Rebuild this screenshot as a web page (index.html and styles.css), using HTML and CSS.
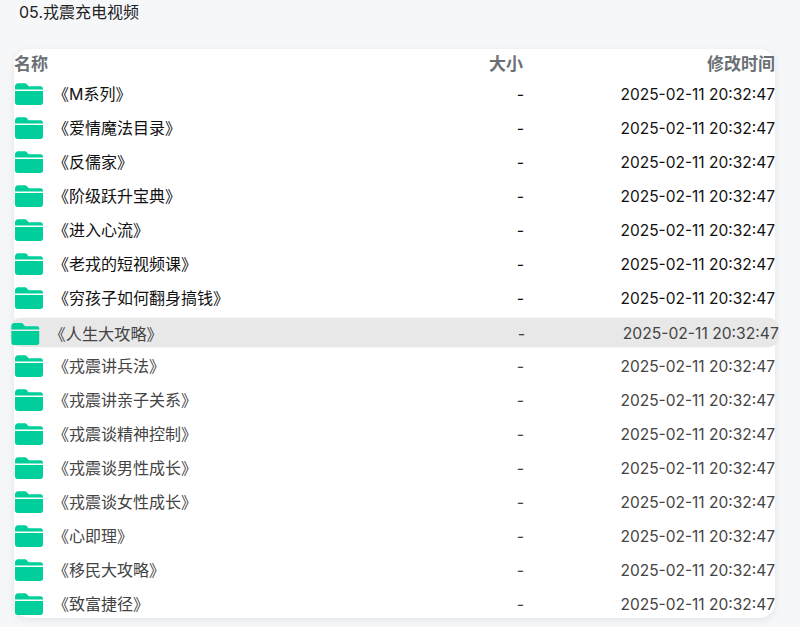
FILE: index.html
```html
<!DOCTYPE html>
<html lang="zh-CN">
<head>
<meta charset="utf-8">
<title>05.戎震充电视频</title>
<link rel="stylesheet" href="styles.css">
</head>
<body>
<svg class="defs" width="0" height="0" aria-hidden="true"><symbol id="folder" viewBox="0 0 28 22"><path d="M0 3.5C0 1.6 1.4 0.2 3 0.2h6.2c1.3 0 2.2.5 3 1.4l1 1.2c.3.4.7.5 1.2.5H25.500c1.400 0 2.500 1 2.500 2.400V6.500H0z"/><path d="M0 8h28v11.500c0 1.400-1.100 2.500-2.500 2.500h-23C1.100 22 0 20.900 0 19.500z"/></symbol></svg>
<div class="crumb">05.戎震充电视频</div>
<main class="card">
<div class="row head"><span class="name">名称</span><span class="size">大小</span><span class="time">修改时间</span></div>
<div class="row"><span class="name"><svg class="icon"><use href="#folder"/></svg><span>《M系列》</span></span><span class="size">-</span><span class="time">2025-02-11 20:32:47</span></div>
<div class="row"><span class="name"><svg class="icon"><use href="#folder"/></svg><span>《爱情魔法目录》</span></span><span class="size">-</span><span class="time">2025-02-11 20:32:47</span></div>
<div class="row"><span class="name"><svg class="icon"><use href="#folder"/></svg><span>《反儒家》</span></span><span class="size">-</span><span class="time">2025-02-11 20:32:47</span></div>
<div class="row"><span class="name"><svg class="icon"><use href="#folder"/></svg><span>《阶级跃升宝典》</span></span><span class="size">-</span><span class="time">2025-02-11 20:32:47</span></div>
<div class="row"><span class="name"><svg class="icon"><use href="#folder"/></svg><span>《进入心流》</span></span><span class="size">-</span><span class="time">2025-02-11 20:32:47</span></div>
<div class="row"><span class="name"><svg class="icon"><use href="#folder"/></svg><span>《老戎的短视频课》</span></span><span class="size">-</span><span class="time">2025-02-11 20:32:47</span></div>
<div class="row"><span class="name"><svg class="icon"><use href="#folder"/></svg><span>《穷孩子如何翻身搞钱》</span></span><span class="size">-</span><span class="time">2025-02-11 20:32:47</span></div>
<div class="row active muted"><span class="name"><svg class="icon"><use href="#folder"/></svg><span>《人生大攻略》</span></span><span class="size">-</span><span class="time">2025-02-11 20:32:47</span></div>
<div class="row muted"><span class="name"><svg class="icon"><use href="#folder"/></svg><span>《戎震讲兵法》</span></span><span class="size">-</span><span class="time">2025-02-11 20:32:47</span></div>
<div class="row muted"><span class="name"><svg class="icon"><use href="#folder"/></svg><span>《戎震讲亲子关系》</span></span><span class="size">-</span><span class="time">2025-02-11 20:32:47</span></div>
<div class="row muted"><span class="name"><svg class="icon"><use href="#folder"/></svg><span>《戎震谈精神控制》</span></span><span class="size">-</span><span class="time">2025-02-11 20:32:47</span></div>
<div class="row muted"><span class="name"><svg class="icon"><use href="#folder"/></svg><span>《戎震谈男性成长》</span></span><span class="size">-</span><span class="time">2025-02-11 20:32:47</span></div>
<div class="row muted"><span class="name"><svg class="icon"><use href="#folder"/></svg><span>《戎震谈女性成长》</span></span><span class="size">-</span><span class="time">2025-02-11 20:32:47</span></div>
<div class="row muted"><span class="name"><svg class="icon"><use href="#folder"/></svg><span>《心即理》</span></span><span class="size">-</span><span class="time">2025-02-11 20:32:47</span></div>
<div class="row muted"><span class="name"><svg class="icon"><use href="#folder"/></svg><span>《移民大攻略》</span></span><span class="size">-</span><span class="time">2025-02-11 20:32:47</span></div>
<div class="row muted last"><span class="name"><svg class="icon"><use href="#folder"/></svg><span>《致富捷径》</span></span><span class="size">-</span><span class="time">2025-02-11 20:32:47</span></div>
</main>
</body>
</html>
```
FILE: styles.css
```css
* { box-sizing: border-box; }
html, body { height: 100%; }
body {
  margin: 0;
  padding: 0 25px 0 14px;
  overflow: hidden;
  background: #f6f7f9;
  color: #111;
  font-family: "Inter", "Noto Sans CJK SC", sans-serif;
  font-size: 16px;
}
.defs { position: absolute; }
.crumb { height: 49px; padding: 1px 0 0 5px; line-height: 23px; color: #222; }
.card {
  height: 569px;
  background: #fff;
  border-radius: 15px;
  box-shadow: 0 2px 8px rgba(0, 0, 0, 0.08);
}
.row {
  display: grid;
  grid-template-columns: 1fr 120px 252px;
  align-items: center;
  height: 34px;
  border-radius: 10px;
}
.head { height: 27px; font-size: 17px; font-weight: 700; color: #6b7075; }
.head .name { padding-left: 0; }
.size, .time { text-align: right; padding-top: 2px; }
.size { margin-right: -1px; }
.row .time { font-size: 15.5px; }
.head .size, .head .time { padding: 0; margin: 0; }
.head.row .time { font-size: 17px; }
.name { display: flex; align-items: center; padding-left: 1px; }
.icon { width: 28px; height: 22px; margin: 2px 10px 0 0; fill: #00cf9b; flex: none; }
.muted { color: #444; }
.active {
  position: relative;
  height: 29px;
  margin: 4px 0 1px;
  background: #e8e8e8;
  transform: scale(1.01);
}
```
